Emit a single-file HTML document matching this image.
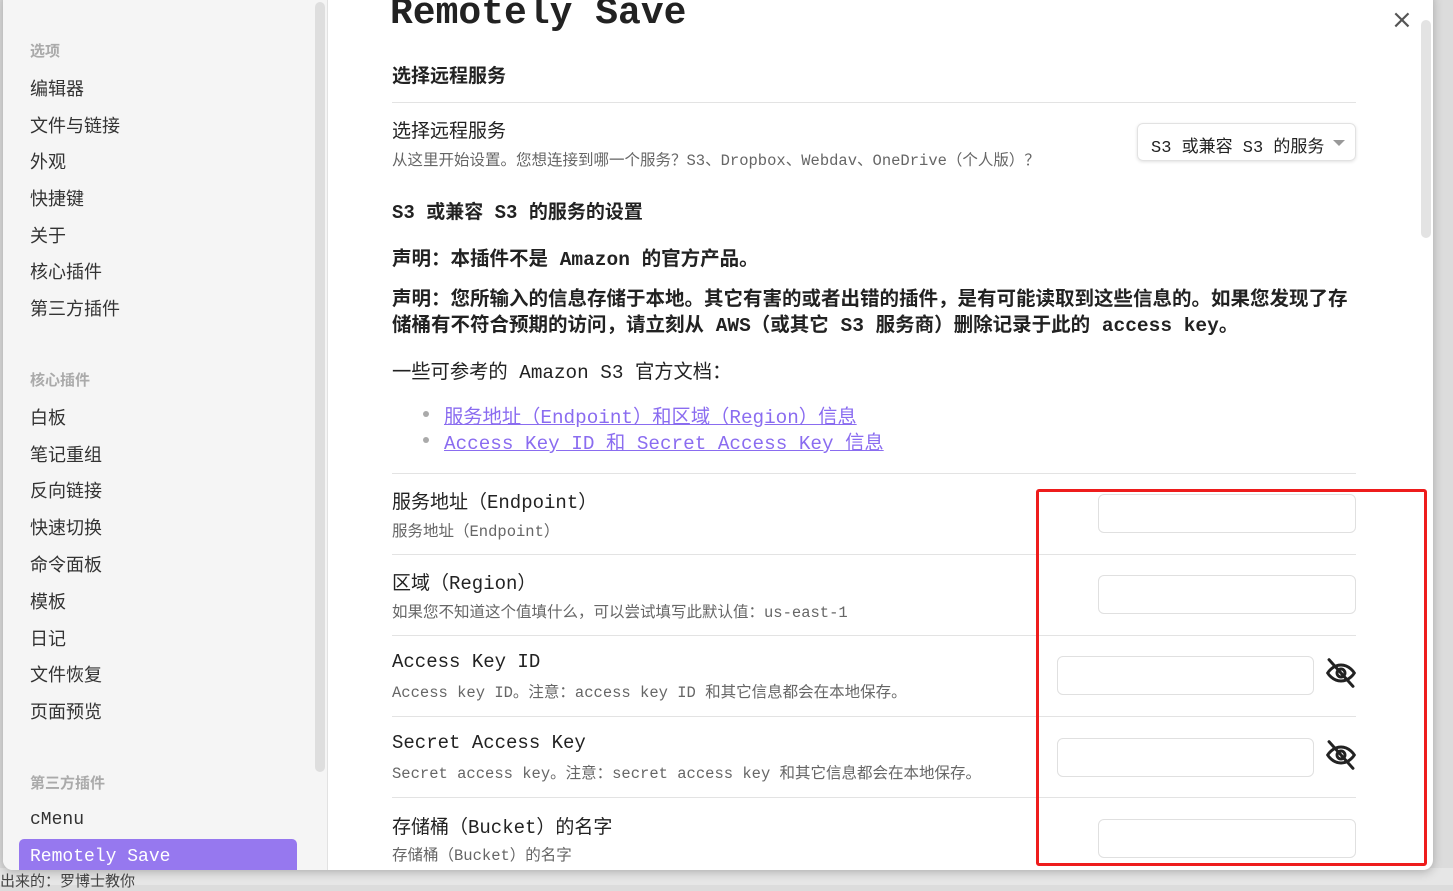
<!DOCTYPE html>
<html><head><meta charset="utf-8"><style>
*{margin:0;padding:0;box-sizing:border-box}
body{width:1453px;height:885px;overflow:hidden;background:#dcdcdc;font-family:"Liberation Mono","Noto Sans CJK SC",monospace;color:#222;position:relative}
.a{position:absolute;white-space:nowrap}
.bg{position:absolute;left:0;top:868px;width:1453px;height:17px;background:#e6e6e6}
.modal{position:absolute;left:3px;top:-10px;width:1430px;height:880px;background:#fff;border-radius:10px;overflow:hidden;box-shadow:0 2px 10px rgba(0,0,0,.25)}
.side{position:absolute;left:0;top:0;width:325px;height:880px;background:#f5f5f5;border-right:1px solid #e2e2e2}
.si{position:absolute;left:27px;font-size:18px;color:#333}
.sh{position:absolute;left:27px;font-size:15px;color:#aaa;font-weight:bold}
.hr{position:absolute;left:389px;width:964px;height:1px;background:#e3e3e3}
.inp{position:absolute;height:39px;border:1px solid #e0e0e0;border-radius:6px;background:#fff}
.nm{position:absolute;left:389px;font-size:19px;color:#222}
.ds{position:absolute;left:389px;font-size:15.5px;color:#666}
.lk{color:#8a6cf0;text-decoration:underline;font-size:19.3px}
.b{font-size:19.5px;font-weight:bold;color:#222}
</style></head><body>
<div class="bg"></div>
<div class="a" style="left:0;top:870px;font-size:15px;color:#444">出来的：罗博士教你</div>
<div class="modal">
 <div class="side">
  <div style="position:absolute;left:312px;top:12px;width:10px;height:770px;background:#dedede;border-radius:5px"></div>
  <div class="sh" style="top:50px">选项</div>
  <div class="si" style="top:85px">编辑器</div>
  <div class="si" style="top:122px">文件与链接</div>
  <div class="si" style="top:158px">外观</div>
  <div class="si" style="top:195px">快捷键</div>
  <div class="si" style="top:232px">关于</div>
  <div class="si" style="top:268px">核心插件</div>
  <div class="si" style="top:305px">第三方插件</div>
  <div class="sh" style="top:379px">核心插件</div>
  <div class="si" style="top:414px">白板</div>
  <div class="si" style="top:451px">笔记重组</div>
  <div class="si" style="top:487px">反向链接</div>
  <div class="si" style="top:524px">快速切换</div>
  <div class="si" style="top:561px">命令面板</div>
  <div class="si" style="top:598px">模板</div>
  <div class="si" style="top:635px">日记</div>
  <div class="si" style="top:671px">文件恢复</div>
  <div class="si" style="top:708px">页面预览</div>
  <div class="sh" style="top:782px">第三方插件</div>
  <div class="si" style="top:820px">cMenu</div>
  <div style="position:absolute;left:16px;top:849px;width:278px;height:40px;background:#9678ef;border-radius:5px"></div>
  <div class="si" style="top:857px;color:#fff">Remotely Save</div>
 </div>
 <div style="position:absolute;left:1418px;top:30px;width:10px;height:218px;background:#e3e3e3;border-radius:5px"></div>
 <div class="a" style="left:1388px;top:15px;font-size:26px;color:#555;font-family:'DejaVu Sans',sans-serif">×</div>
 <div class="a" style="left:387px;top:2px;font-size:38px;font-weight:bold;color:#222">Remotely Save</div>
 <div class="a b" style="left:389px;top:71px;font-size:19px">选择远程服务</div>
 <div class="hr" style="top:112px"></div>
 <div class="nm" style="top:126px">选择远程服务</div>
 <div class="ds" style="top:158px">从这里开始设置。您想连接到哪一个服务？S3、Dropbox、Webdav、OneDrive（个人版）？</div>
 <div style="position:absolute;left:1134px;top:133px;width:219px;height:38px;border:1px solid #e2e2e2;border-radius:6px;box-shadow:0 1px 3px rgba(0,0,0,.12)"></div>
 <div class="a" style="left:1148px;top:142px;font-size:17px;color:#222">S3 或兼容 S3 的服务</div>
 <div style="position:absolute;left:1330px;top:150px;border-left:6px solid transparent;border-right:6px solid transparent;border-top:6px solid #999"></div>
 <div class="a b" style="left:389px;top:207px;font-size:19px">S3 或兼容 S3 的服务的设置</div>
 <div class="a b" style="left:389px;top:252px">声明：本插件不是 Amazon 的官方产品。</div>
 <div class="a b" style="left:389px;top:297px;line-height:26px">声明：您所输入的信息存储于本地。其它有害的或者出错的插件，是有可能读取到这些信息的。如果您发现了存<br>储桶有不符合预期的访问，请立刻从 AWS（或其它 S3 服务商）删除记录于此的 access key。</div>
 <div class="a" style="left:389px;top:366px;font-size:19.3px">一些可参考的 Amazon S3 官方文档：</div>
 <div style="position:absolute;left:420px;top:421px;width:6px;height:6px;border-radius:3px;background:#aaa"></div>
 <div class="a" style="left:441px;top:411px"><span class="lk">服务地址（Endpoint）和区域（Region）信息</span></div>
 <div style="position:absolute;left:420px;top:447px;width:6px;height:6px;border-radius:3px;background:#aaa"></div>
 <div class="a" style="left:441px;top:437px"><span class="lk">Access Key ID 和 Secret Access Key 信息</span></div>
 <div class="hr" style="top:483px"></div>
 <div class="nm" style="top:497px">服务地址（Endpoint）</div>
 <div class="ds" style="top:529px">服务地址（Endpoint）</div>
 <div class="inp" style="left:1095px;top:504px;width:258px"></div>
 <div class="hr" style="top:564px"></div>
 <div class="nm" style="top:578px">区域（Region）</div>
 <div class="ds" style="top:610px">如果您不知道这个值填什么，可以尝试填写此默认值：us-east-1</div>
 <div class="inp" style="left:1095px;top:585px;width:258px"></div>
 <div class="hr" style="top:645px"></div>
 <div class="nm" style="top:661px">Access Key ID</div>
 <div class="ds" style="top:690px">Access key ID。注意：access key ID 和其它信息都会在本地保存。</div>
 <div class="inp" style="left:1054px;top:666px;width:257px"></div>
 <svg class="a" style="left:1322px;top:667px" width="32" height="32" viewBox="0 0 24 24" fill="none" stroke="#222" stroke-width="2.2" stroke-linecap="round"><path d="M2 12s3.5-6 10-6 10 6 10 6-3.5 6-10 6S2 12 2 12z"/><circle cx="12" cy="12" r="3"/><path d="M3 2l18 20"/></svg>
 <div class="hr" style="top:726px"></div>
 <div class="nm" style="top:742px">Secret Access Key</div>
 <div class="ds" style="top:771px">Secret access key。注意：secret access key 和其它信息都会在本地保存。</div>
 <div class="inp" style="left:1054px;top:748px;width:257px"></div>
 <svg class="a" style="left:1322px;top:749px" width="32" height="32" viewBox="0 0 24 24" fill="none" stroke="#222" stroke-width="2.2" stroke-linecap="round"><path d="M2 12s3.5-6 10-6 10 6 10 6-3.5 6-10 6S2 12 2 12z"/><circle cx="12" cy="12" r="3"/><path d="M3 2l18 20"/></svg>
 <div class="hr" style="top:807px"></div>
 <div class="nm" style="top:822px">存储桶（Bucket）的名字</div>
 <div class="ds" style="top:853px">存储桶（Bucket）的名字</div>
 <div class="inp" style="left:1095px;top:829px;width:258px"></div>
 <div style="position:absolute;left:1033px;top:499px;width:391px;height:377px;border:3px solid #ee1c1c;border-radius:3px"></div>
</div>
</body></html>
